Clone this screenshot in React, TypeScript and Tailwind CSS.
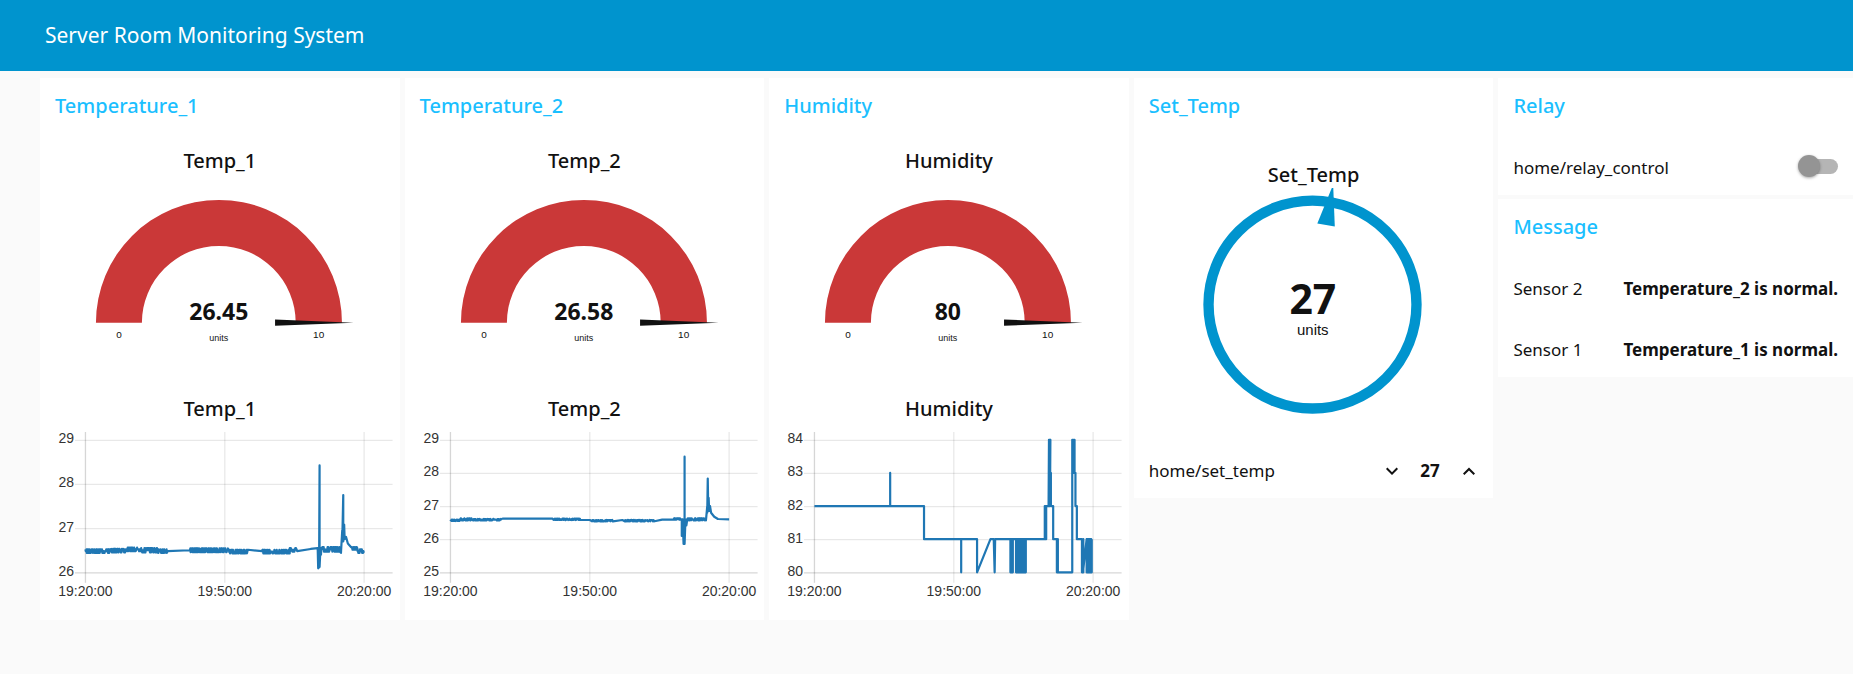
import { useState } from "react";
import type { ReactNode } from "react";

type Point = [minute: number, value: number];

// Small deterministic jitter around a level, as a sensor would report it.
function jitter(from: number, to: number, level: number, amount: number, step = 0.07): Point[] {
  const points: Point[] = [];
  let seed = Math.round(from * 97) + 13;
  for (let t = from; t <= to; t += step) {
    seed = (seed * 1103515245 + 12345) % 2147483648;
    const r = seed / 2147483648;
    points.push([t, level + (r > 0.66 ? amount : r < 0.33 ? -amount : 0)]);
  }
  return points;
}

function toggling(from: number, to: number, low: number, high: number): Point[] {
  const points: Point[] = [];
  for (let t = from; t <= to; t += 0.2) {
    points.push([t, high], [t, low], [t + 0.1, low], [t + 0.1, high]);
  }
  return points;
}

const temp1: Point[] = [
  ...jitter(0, 5.6, 26.48, 0.04),
  ...jitter(5.6, 8.6, 26.49, 0.04),
  ...jitter(8.6, 12, 26.52, 0.04),
  ...jitter(12, 15.5, 26.5, 0.05),
  ...jitter(15.5, 17.6, 26.48, 0.04),
  [17.7, 26.48],
  [22.4, 26.5],
  ...jitter(22.5, 31, 26.5, 0.04),
  ...jitter(31, 35, 26.47, 0.04),
  [38, 26.48],
  ...jitter(38.1, 44, 26.47, 0.04),
  ...jitter(44, 45.4, 26.51, 0.04),
  [45.6, 26.48],
  [48.5, 26.53],
  [50, 26.55],
  [50.1, 26.09],
  [50.3, 26.12],
  [50.4, 28.42],
  [50.4, 26.12],
  [50.6, 26.55],
  [50.7, 26.4],
  [50.8, 26.55],
  ...jitter(51, 54.8, 26.52, 0.05),
  [55, 26.44],
  [55.3, 26.95],
  [55.3, 26.7],
  [55.5, 27.75],
  [55.5, 26.7],
  [55.7, 27.08],
  [55.8, 26.75],
  [56.1, 26.8],
  [56.5, 26.65],
  [57.2, 26.57],
  ...jitter(57.3, 58.6, 26.54, 0.03),
  ...jitter(58.6, 60, 26.48, 0.04),
];

const temp2: Point[] = [
  ...jitter(0, 2, 26.57, 0.02),
  ...jitter(2, 5, 26.6, 0.03),
  ...jitter(5, 11, 26.59, 0.02),
  [11.2, 26.62],
  [22, 26.62],
  ...jitter(22.2, 28, 26.6, 0.02),
  [30, 26.58],
  ...jitter(30.5, 35, 26.56, 0.02),
  [37, 26.58],
  ...jitter(37.5, 44, 26.56, 0.02),
  [45.6, 26.59],
  ...jitter(48, 49.6, 26.61, 0.02),
  [49.8, 26.6],
  [49.8, 26.1],
  [50, 26.6],
  [50.2, 25.86],
  [50.4, 25.86],
  [50.4, 28.49],
  [50.4, 25.86],
  [50.6, 26.6],
  [50.8, 26.42],
  [51, 26.6],
  ...jitter(51.1, 54.9, 26.6, 0.03),
  [55, 26.57],
  [55.3, 27],
  [55.3, 26.8],
  [55.4, 27.83],
  [55.5, 26.85],
  [55.6, 27.25],
  [55.7, 26.85],
  [55.9, 27],
  [56.1, 26.8],
  [56.8, 26.68],
  [57.6, 26.61],
  [60, 26.6],
];

const humidity: Point[] = [
  [0, 82], [16.3, 82], [16.3, 83], [16.3, 82],
  [23.6, 82], [23.6, 81],
  [31.6, 81], [31.6, 80], [31.6, 81],
  [35, 81], [35, 80], [37.9, 81],
  [38.6, 81], [38.8, 80], [38.9, 81],
  ...toggling(42.2, 42.8, 80, 81),
  ...toggling(43.4, 45.5, 80, 81),
  [49.6, 81], [49.6, 82], [49.9, 82], [49.9, 81], [49.8, 82],
  [50.4, 82], [50.5, 84], [50.7, 84], [50.5, 82], [50.7, 82], [50.8, 84], [50.7, 83], [50.9, 83], [50.9, 82],
  [51.4, 82], [51.4, 81],
  [52.2, 81], [52.2, 80], [52.4, 80], [52.4, 81], [52.3, 80],
  [55.5, 80], [55.5, 84], [55.7, 84], [55.7, 83], [55.9, 83], [55.9, 84], [56, 84], [56, 83],
  [56.2, 83], [56.2, 82], [56.5, 82], [56.5, 81],
  [57.6, 81], [57.6, 80], [57.9, 80], [57.9, 81], [57.8, 80],
  ...toggling(58.6, 59.7, 80, 81),
];

function Gauge({ title, value }: { title: string; value: string }) {
  return (
    <div>
      <h3 className="flex h-14 items-center justify-center pb-0.5 text-xl font-medium">{title}</h3>
      <svg viewBox="0 0 360 198" className="block h-auto w-full" role="img" aria-label={`${title} gauge`}>
        <path d="M56 133A123 123 0 0 1 302.3 133H256A77 77 0 0 0 102 133Z" fill="#ca3838" />
        <path d="M235.3 129.7 314 132.8 235.3 136Z" fill="#111111" />
        <g fill="#111111" textAnchor="middle" className="font-['Liberation_Sans',sans-serif]">
          <text x="179" y="130" className="font-['Noto_Sans',sans-serif] text-[23px] font-bold">
            {value}
          </text>
          <text x="79" y="148" className="text-[10px]">0</text>
          <text x="279" y="148" className="text-[10px]">10</text>
          <text x="179" y="151" className="text-[9px]">units</text>
        </g>
      </svg>
    </div>
  );
}

function Chart({ title, min, max, data }: { title: string; min: number; max: number; data: Point[] }) {
  const left = 45.5;
  const right = 324.5;
  const top = 8.3;
  const bottom = 141;
  const x = (m: number) => left + (m / 60) * (right - left);
  const y = (v: number) => bottom - ((v - min) / (max - min)) * (bottom - top);
  const ticks = Array.from({ length: max - min + 1 }, (_, i) => min + i);
  const times: [number, string][] = [
    [0, "19:20:00"],
    [30, "19:50:00"],
    [60, "20:20:00"],
  ];
  return (
    <div>
      <h3 className="flex h-11 items-center justify-center pb-0.5 text-xl font-medium">{title}</h3>
      <svg viewBox="0 0 360 188" className="block h-auto w-full overflow-visible" role="img" aria-label={`${title} chart`}>
        {ticks.map((t) => (
          <line key={t} x1="35" x2="353" y1={y(t)} y2={y(t)} stroke="#000" strokeOpacity={t === min ? 0.16 : 0.09} strokeWidth="1.3" />
        ))}
        {times.map(([m, label]) => (
          <line key={label} x1={x(m)} x2={x(m)} y1="0" y2="151" stroke="#000" strokeOpacity={m === 0 ? 0.16 : 0.09} strokeWidth="1.3" />
        ))}
        <polyline
          points={data.map(([m, v]) => `${x(m).toFixed(1)},${(y(v) - 0.5).toFixed(1)}`).join(" ")}
          fill="none"
          stroke="#1f77b4"
          strokeWidth="2.2"
          strokeLinejoin="round"
        />
        <g fill="#333333" className="font-['Liberation_Sans',sans-serif] text-[14px]">
          {ticks.map((t) => (
            <text key={t} x="34" y={y(t) + 3} textAnchor="end">{t}</text>
          ))}
          {times.map(([m, label]) => (
            <text key={label} x={x(m)} y="164" textAnchor="middle">{label}</text>
          ))}
        </g>
      </svg>
    </div>
  );
}

function Card({ title, children }: { title: string; children: ReactNode }) {
  return (
    <section className="bg-white">
      <h2 className="flex h-14 items-center px-[15px] text-xl font-medium text-[#1bbfff]">{title}</h2>
      {children}
    </section>
  );
}

function SetTemp() {
  const [value, setValue] = useState(27);
  const turn = ((value - 27) / 100) * 360;
  return (
    <Card title="Set_Temp">
      <h3 className="mt-7 flex h-7 items-center justify-center pb-0.5 text-xl font-medium">Set_Temp</h3>
      <svg viewBox="0 112 360 254" className="block h-auto w-full overflow-visible" role="img" aria-label="Set_Temp dial">
        <circle cx="178.7" cy="226.7" r="104.1" fill="none" stroke="#0094ce" strokeWidth="10.4" />
        <path d="M183.5 145.5 201 148.5 199.5 110H198Z" fill="#0094ce" transform={`rotate(${turn} 178.7 226.7)`} />
        <g fill="#111111" textAnchor="middle">
          <text x="179" y="236" className="font-['Noto_Sans',sans-serif] text-[41px] font-bold">{value}</text>
          <text x="179" y="257" className="font-['Liberation_Sans',sans-serif] text-[15px]">units</text>
        </g>
      </svg>
      <div className="flex h-[54px] items-center justify-between px-[15px]">
        <span id="set-temp-label">home/set_temp</span>
        <div className="flex items-center" role="group" aria-labelledby="set-temp-label">
          <button type="button" aria-label="Decrease" className="w-5" onClick={() => setValue(value - 1)}>
            <svg viewBox="1 0 20 24" className="block h-6 w-5" fill="#111111">
              <path d="M7.41 8.59 12 13.17l4.59-4.58L18 10l-6 6-6-6z" />
            </svg>
          </button>
          <output className="w-[57px] text-center font-bold">{value}</output>
          <button type="button" aria-label="Increase" className="w-5" onClick={() => setValue(value + 1)}>
            <svg viewBox="1 0 20 24" className="block h-6 w-5" fill="#111111">
              <path d="M7.41 16 12 11.42 16.59 16 18 14.59l-6-6-6 6z" />
            </svg>
          </button>
        </div>
      </div>
    </Card>
  );
}

function Relay() {
  const [on, setOn] = useState(false);
  return (
    <Card title="Relay">
      <div className="mt-[7px] flex h-[54px] items-center justify-between px-[15px]">
        <label htmlFor="relay">home/relay_control</label>
        <input
          id="relay"
          type="checkbox"
          role="switch"
          checked={on}
          onChange={(e) => setOn(e.target.checked)}
          className="relative mb-1 h-[15px] w-[34px] appearance-none rounded-full bg-[#b5b5b5] before:absolute before:-top-1 before:-left-1.5 before:size-[22px] before:rounded-full before:bg-[#949494] before:shadow-[0_1px_3px_rgba(0,0,0,0.35)] checked:bg-[#8fd0ea] checked:before:left-4 checked:before:bg-[#0094ce]"
        />
      </div>
    </Card>
  );
}

function Message({ label, text }: { label: string; text: string }) {
  return (
    <p className="mt-[7px] flex h-[54px] items-center justify-between px-[15px]">
      <span>{label}</span>
      <strong className="font-bold">{text}</strong>
    </p>
  );
}

export default function App() {
  return (
    <div className="min-h-screen bg-[#fafafa] font-['Noto_Sans',sans-serif] text-[17px] text-[#111111]">
      <header className="flex h-[71px] items-center bg-[#0094ce] px-[45px]">
        <h1 className="text-[21px] text-white">Server Room Monitoring System</h1>
      </header>
      <main className="grid grid-cols-[360fr_360fr_360fr_360fr_355fr] items-start gap-[5px] pt-[7px] pl-10">
        <Card title="Temperature_1">
          <Gauge title="Temp_1" value="26.45" />
          <Chart title="Temp_1" min={26} max={29} data={temp1} />
        </Card>
        <Card title="Temperature_2">
          <Gauge title="Temp_2" value="26.58" />
          <Chart title="Temp_2" min={25} max={29} data={temp2} />
        </Card>
        <Card title="Humidity">
          <Gauge title="Humidity" value="80" />
          <Chart title="Humidity" min={80} max={84} data={humidity} />
        </Card>
        <SetTemp />
        <div className="flex flex-col gap-1">
          <Relay />
          <Card title="Message">
            <Message label="Sensor 2" text="Temperature_2 is normal." />
            <Message label="Sensor 1" text="Temperature_1 is normal." />
          </Card>
        </div>
      </main>
    </div>
  );
}
